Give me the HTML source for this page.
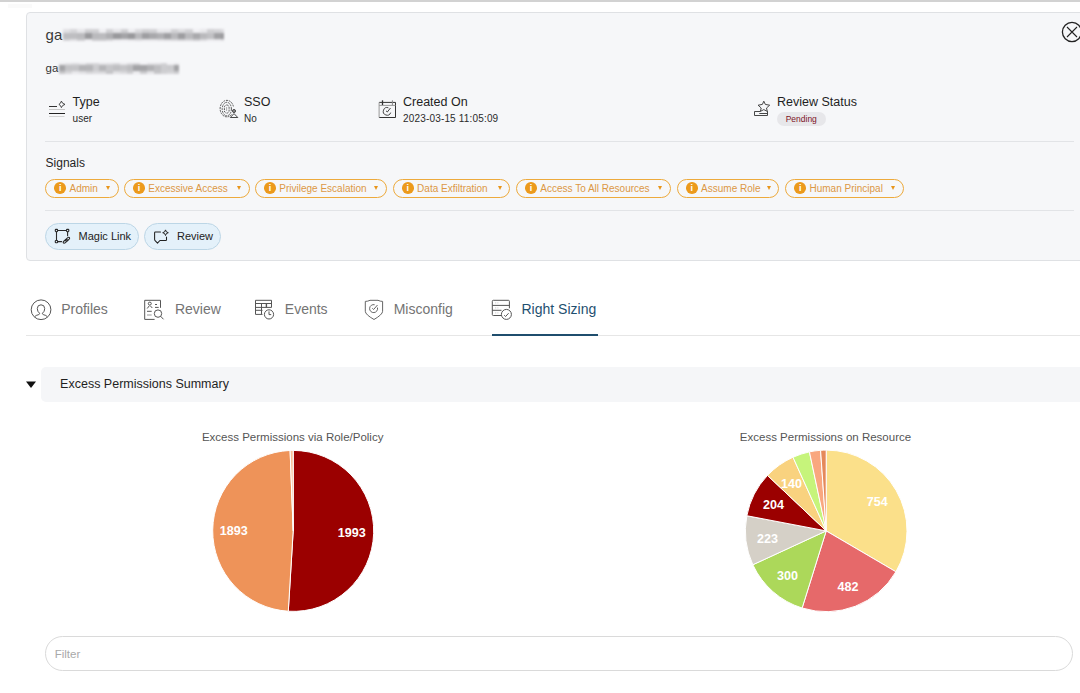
<!DOCTYPE html>
<html><head><meta charset="utf-8">
<style>
*{box-sizing:border-box;margin:0;padding:0}
html,body{width:1080px;height:693px;overflow:hidden;background:#fff;font-family:"Liberation Sans",sans-serif;color:#1f1f1f}
.a{position:absolute;white-space:nowrap;line-height:1}
#topbar{position:absolute;left:0;top:0;width:1080px;height:2px;background:#d2d2d2}
#card{position:absolute;left:26px;top:12px;width:1100px;height:249px;background:#f6f7f9;border:1px solid #dfe1e4;border-radius:4px}
.blur{position:absolute;background:#c9cbce;filter:blur(1.2px)}
.div{position:absolute;height:1px;background:#e2e4e7}
.lbl{font-size:12.5px;color:#1f1f1f;margin-top:1px}
.val{font-size:10px;color:#2a2a2a;margin-top:1.2px}
#pending{position:absolute;left:777px;top:111.7px;width:48.5px;height:14.3px;border-radius:8px;background:#e7e7ea;color:#7d1326;font-size:8.5px;line-height:14.3px;text-align:center}
.chips{position:absolute;left:26px;top:178.6px}
.chip{position:absolute;top:-0.1px;height:19.1px;border:1.4px solid #edaa3c;border-radius:10px;background:transparent}
.chip .info{position:absolute;left:8.2px;top:2.8px;width:11.7px;height:11.7px;border-radius:50%;background:#ec9a1c;color:#fff;font-size:9px;font-weight:bold;text-align:center;line-height:12px}
.chip .ct{position:absolute;left:23.3px;top:4.2px;font-size:10px;line-height:10px;color:#dc9845}
.chip .caret{position:absolute;right:7.6px;top:6.7px;width:0;height:0;border-left:2.7px solid transparent;border-right:2.7px solid transparent;border-top:4.4px solid #e8951a}
.btn{position:absolute;top:223px;height:26.5px;border:1px solid #bcd6e6;border-radius:14px;background:#e4f1fa}
.btn .t{position:absolute;font-size:11px;color:#222;line-height:1}
.tab{position:absolute;top:301.9px;font-size:14px;line-height:1;color:#747474}
#tabline{position:absolute;left:26px;top:335px;width:1054px;height:1px;background:#e6e6e6}
#tabact{position:absolute;left:492px;top:334px;width:105.5px;height:2px;background:#1f4e6d}
#acc{position:absolute;left:40.6px;top:366.7px;width:1100px;height:35.1px;border-radius:5px;background:#f5f6f8}
.ptitle{position:absolute;top:431.7px;font-size:11.5px;line-height:1;color:#555;text-align:center;width:300px}
.plabel{position:absolute;font-size:12.6px;font-weight:bold;color:#fff;line-height:1;text-align:center;width:40px;margin-top:-0.3px}
#filter{position:absolute;left:45.4px;top:636.2px;width:1627.6px;height:35.2px;border:1.2px solid #dadada;border-radius:18px;background:#fff}
</style></head><body>
<div id="topbar"></div>
<div style="position:absolute;left:8px;top:3.5px;width:24px;height:4px;background:#fafafa"></div>
<div id="card"></div>

<!-- title -->
<div class="a" style="left:45.6px;top:27.3px;font-size:15px;color:#3a3a3a">ga</div>
<div style="position:absolute;left:0;top:0;filter:blur(0.9px)"><div style="position:absolute;left:63.0px;top:28.7px;width:7.5px;height:4.699999999999999px;background:rgb(225,225,228)"></div><div style="position:absolute;left:70.2px;top:28.7px;width:7.5px;height:4.699999999999999px;background:rgb(214,214,217)"></div><div style="position:absolute;left:77.4px;top:28.7px;width:7.5px;height:4.699999999999999px;background:rgb(230,230,233)"></div><div style="position:absolute;left:84.6px;top:28.7px;width:7.5px;height:4.699999999999999px;background:rgb(208,208,211)"></div><div style="position:absolute;left:91.8px;top:28.7px;width:7.5px;height:4.699999999999999px;background:rgb(209,209,212)"></div><div style="position:absolute;left:99.0px;top:28.7px;width:7.5px;height:4.699999999999999px;background:rgb(239,239,242)"></div><div style="position:absolute;left:106.2px;top:28.7px;width:7.5px;height:4.699999999999999px;background:rgb(211,211,214)"></div><div style="position:absolute;left:113.4px;top:28.7px;width:7.5px;height:4.699999999999999px;background:rgb(228,228,231)"></div><div style="position:absolute;left:120.6px;top:28.7px;width:7.5px;height:4.699999999999999px;background:rgb(208,208,211)"></div><div style="position:absolute;left:127.8px;top:28.7px;width:7.5px;height:4.699999999999999px;background:rgb(237,237,240)"></div><div style="position:absolute;left:135.0px;top:28.7px;width:7.5px;height:4.699999999999999px;background:rgb(218,218,221)"></div><div style="position:absolute;left:142.2px;top:28.7px;width:7.5px;height:4.699999999999999px;background:rgb(207,207,210)"></div><div style="position:absolute;left:149.4px;top:28.7px;width:7.5px;height:4.699999999999999px;background:rgb(210,210,213)"></div><div style="position:absolute;left:156.6px;top:28.7px;width:7.5px;height:4.699999999999999px;background:rgb(232,232,235)"></div><div style="position:absolute;left:163.8px;top:28.7px;width:7.5px;height:4.699999999999999px;background:rgb(231,231,234)"></div><div style="position:absolute;left:171.0px;top:28.7px;width:7.5px;height:4.699999999999999px;background:rgb(209,209,212)"></div><div style="position:absolute;left:178.2px;top:28.7px;width:7.5px;height:4.699999999999999px;background:rgb(220,220,223)"></div><div style="position:absolute;left:185.4px;top:28.7px;width:7.5px;height:4.699999999999999px;background:rgb(210,210,213)"></div><div style="position:absolute;left:192.6px;top:28.7px;width:7.5px;height:4.699999999999999px;background:rgb(240,240,243)"></div><div style="position:absolute;left:199.8px;top:28.7px;width:7.5px;height:4.699999999999999px;background:rgb(232,232,235)"></div><div style="position:absolute;left:207.0px;top:28.7px;width:7.5px;height:4.699999999999999px;background:rgb(208,208,211)"></div><div style="position:absolute;left:214.2px;top:28.7px;width:7.5px;height:4.699999999999999px;background:rgb(212,212,215)"></div><div style="position:absolute;left:221.4px;top:28.7px;width:2.9px;height:4.699999999999999px;background:rgb(219,219,222)"></div><div style="position:absolute;left:63.0px;top:33.4px;width:7.5px;height:5.200000000000003px;background:rgb(190,190,193)"></div><div style="position:absolute;left:70.2px;top:33.4px;width:7.5px;height:5.200000000000003px;background:rgb(190,190,193)"></div><div style="position:absolute;left:77.4px;top:33.4px;width:7.5px;height:5.200000000000003px;background:rgb(187,187,190)"></div><div style="position:absolute;left:84.6px;top:33.4px;width:7.5px;height:5.200000000000003px;background:rgb(153,153,156)"></div><div style="position:absolute;left:91.8px;top:33.4px;width:7.5px;height:5.200000000000003px;background:rgb(186,186,189)"></div><div style="position:absolute;left:99.0px;top:33.4px;width:7.5px;height:5.200000000000003px;background:rgb(187,187,190)"></div><div style="position:absolute;left:106.2px;top:33.4px;width:7.5px;height:5.200000000000003px;background:rgb(175,175,178)"></div><div style="position:absolute;left:113.4px;top:33.4px;width:7.5px;height:5.200000000000003px;background:rgb(153,153,156)"></div><div style="position:absolute;left:120.6px;top:33.4px;width:7.5px;height:5.200000000000003px;background:rgb(164,164,167)"></div><div style="position:absolute;left:127.8px;top:33.4px;width:7.5px;height:5.200000000000003px;background:rgb(152,152,155)"></div><div style="position:absolute;left:135.0px;top:33.4px;width:7.5px;height:5.200000000000003px;background:rgb(185,185,188)"></div><div style="position:absolute;left:142.2px;top:33.4px;width:7.5px;height:5.200000000000003px;background:rgb(158,158,161)"></div><div style="position:absolute;left:149.4px;top:33.4px;width:7.5px;height:5.200000000000003px;background:rgb(168,168,171)"></div><div style="position:absolute;left:156.6px;top:33.4px;width:7.5px;height:5.200000000000003px;background:rgb(176,176,179)"></div><div style="position:absolute;left:163.8px;top:33.4px;width:7.5px;height:5.200000000000003px;background:rgb(159,159,162)"></div><div style="position:absolute;left:171.0px;top:33.4px;width:7.5px;height:5.200000000000003px;background:rgb(184,184,187)"></div><div style="position:absolute;left:178.2px;top:33.4px;width:7.5px;height:5.200000000000003px;background:rgb(157,157,160)"></div><div style="position:absolute;left:185.4px;top:33.4px;width:7.5px;height:5.200000000000003px;background:rgb(186,186,189)"></div><div style="position:absolute;left:192.6px;top:33.4px;width:7.5px;height:5.200000000000003px;background:rgb(169,169,172)"></div><div style="position:absolute;left:199.8px;top:33.4px;width:7.5px;height:5.200000000000003px;background:rgb(185,185,188)"></div><div style="position:absolute;left:207.0px;top:33.4px;width:7.5px;height:5.200000000000003px;background:rgb(193,193,196)"></div><div style="position:absolute;left:214.2px;top:33.4px;width:7.5px;height:5.200000000000003px;background:rgb(161,161,164)"></div><div style="position:absolute;left:221.4px;top:33.4px;width:2.9px;height:5.200000000000003px;background:rgb(156,156,159)"></div><div style="position:absolute;left:63.0px;top:38.6px;width:7.5px;height:2.6999999999999957px;background:rgb(212,212,215)"></div><div style="position:absolute;left:70.2px;top:38.6px;width:7.5px;height:2.6999999999999957px;background:rgb(223,223,226)"></div><div style="position:absolute;left:77.4px;top:38.6px;width:7.5px;height:2.6999999999999957px;background:rgb(206,206,209)"></div><div style="position:absolute;left:84.6px;top:38.6px;width:7.5px;height:2.6999999999999957px;background:rgb(235,235,238)"></div><div style="position:absolute;left:91.8px;top:38.6px;width:7.5px;height:2.6999999999999957px;background:rgb(204,204,207)"></div><div style="position:absolute;left:99.0px;top:38.6px;width:7.5px;height:2.6999999999999957px;background:rgb(203,203,206)"></div><div style="position:absolute;left:106.2px;top:38.6px;width:7.5px;height:2.6999999999999957px;background:rgb(213,213,216)"></div><div style="position:absolute;left:113.4px;top:38.6px;width:7.5px;height:2.6999999999999957px;background:rgb(231,231,234)"></div><div style="position:absolute;left:120.6px;top:38.6px;width:7.5px;height:2.6999999999999957px;background:rgb(234,234,237)"></div><div style="position:absolute;left:127.8px;top:38.6px;width:7.5px;height:2.6999999999999957px;background:rgb(227,227,230)"></div><div style="position:absolute;left:135.0px;top:38.6px;width:7.5px;height:2.6999999999999957px;background:rgb(220,220,223)"></div><div style="position:absolute;left:142.2px;top:38.6px;width:7.5px;height:2.6999999999999957px;background:rgb(229,229,232)"></div><div style="position:absolute;left:149.4px;top:38.6px;width:7.5px;height:2.6999999999999957px;background:rgb(229,229,232)"></div><div style="position:absolute;left:156.6px;top:38.6px;width:7.5px;height:2.6999999999999957px;background:rgb(223,223,226)"></div><div style="position:absolute;left:163.8px;top:38.6px;width:7.5px;height:2.6999999999999957px;background:rgb(219,219,222)"></div><div style="position:absolute;left:171.0px;top:38.6px;width:7.5px;height:2.6999999999999957px;background:rgb(215,215,218)"></div><div style="position:absolute;left:178.2px;top:38.6px;width:7.5px;height:2.6999999999999957px;background:rgb(211,211,214)"></div><div style="position:absolute;left:185.4px;top:38.6px;width:7.5px;height:2.6999999999999957px;background:rgb(215,215,218)"></div><div style="position:absolute;left:192.6px;top:38.6px;width:7.5px;height:2.6999999999999957px;background:rgb(205,205,208)"></div><div style="position:absolute;left:199.8px;top:38.6px;width:7.5px;height:2.6999999999999957px;background:rgb(219,219,222)"></div><div style="position:absolute;left:207.0px;top:38.6px;width:7.5px;height:2.6999999999999957px;background:rgb(233,233,236)"></div><div style="position:absolute;left:214.2px;top:38.6px;width:7.5px;height:2.6999999999999957px;background:rgb(231,231,234)"></div><div style="position:absolute;left:221.4px;top:38.6px;width:2.9px;height:2.6999999999999957px;background:rgb(221,221,224)"></div></div>
<div class="a" style="left:45.6px;top:63px;font-size:11.5px;color:#333">ga</div>
<div style="position:absolute;left:0;top:0;filter:blur(0.9px)"><div style="position:absolute;left:58.6px;top:62.8px;width:7.1px;height:2.4000000000000057px;background:rgb(233,233,236)"></div><div style="position:absolute;left:65.4px;top:62.8px;width:7.1px;height:2.4000000000000057px;background:rgb(224,224,227)"></div><div style="position:absolute;left:72.2px;top:62.8px;width:7.1px;height:2.4000000000000057px;background:rgb(219,219,222)"></div><div style="position:absolute;left:79.0px;top:62.8px;width:7.1px;height:2.4000000000000057px;background:rgb(229,229,232)"></div><div style="position:absolute;left:85.8px;top:62.8px;width:7.1px;height:2.4000000000000057px;background:rgb(212,212,215)"></div><div style="position:absolute;left:92.6px;top:62.8px;width:7.1px;height:2.4000000000000057px;background:rgb(213,213,216)"></div><div style="position:absolute;left:99.4px;top:62.8px;width:7.1px;height:2.4000000000000057px;background:rgb(226,226,229)"></div><div style="position:absolute;left:106.2px;top:62.8px;width:7.1px;height:2.4000000000000057px;background:rgb(223,223,226)"></div><div style="position:absolute;left:113.0px;top:62.8px;width:7.1px;height:2.4000000000000057px;background:rgb(215,215,218)"></div><div style="position:absolute;left:119.8px;top:62.8px;width:7.1px;height:2.4000000000000057px;background:rgb(234,234,237)"></div><div style="position:absolute;left:126.6px;top:62.8px;width:7.1px;height:2.4000000000000057px;background:rgb(220,220,223)"></div><div style="position:absolute;left:133.4px;top:62.8px;width:7.1px;height:2.4000000000000057px;background:rgb(214,214,217)"></div><div style="position:absolute;left:140.2px;top:62.8px;width:7.1px;height:2.4000000000000057px;background:rgb(239,239,242)"></div><div style="position:absolute;left:147.0px;top:62.8px;width:7.1px;height:2.4000000000000057px;background:rgb(225,225,228)"></div><div style="position:absolute;left:153.8px;top:62.8px;width:7.1px;height:2.4000000000000057px;background:rgb(223,223,226)"></div><div style="position:absolute;left:160.6px;top:62.8px;width:7.1px;height:2.4000000000000057px;background:rgb(211,211,214)"></div><div style="position:absolute;left:167.4px;top:62.8px;width:7.1px;height:2.4000000000000057px;background:rgb(240,240,243)"></div><div style="position:absolute;left:174.2px;top:62.8px;width:5.1px;height:2.4000000000000057px;background:rgb(231,231,234)"></div><div style="position:absolute;left:58.6px;top:65.2px;width:7.1px;height:5.599999999999994px;background:rgb(164,164,167)"></div><div style="position:absolute;left:65.4px;top:65.2px;width:7.1px;height:5.599999999999994px;background:rgb(195,195,198)"></div><div style="position:absolute;left:72.2px;top:65.2px;width:7.1px;height:5.599999999999994px;background:rgb(196,196,199)"></div><div style="position:absolute;left:79.0px;top:65.2px;width:7.1px;height:5.599999999999994px;background:rgb(180,180,183)"></div><div style="position:absolute;left:85.8px;top:65.2px;width:7.1px;height:5.599999999999994px;background:rgb(181,181,184)"></div><div style="position:absolute;left:92.6px;top:65.2px;width:7.1px;height:5.599999999999994px;background:rgb(204,204,207)"></div><div style="position:absolute;left:99.4px;top:65.2px;width:7.1px;height:5.599999999999994px;background:rgb(182,182,185)"></div><div style="position:absolute;left:106.2px;top:65.2px;width:7.1px;height:5.599999999999994px;background:rgb(198,198,201)"></div><div style="position:absolute;left:113.0px;top:65.2px;width:7.1px;height:5.599999999999994px;background:rgb(191,191,194)"></div><div style="position:absolute;left:119.8px;top:65.2px;width:7.1px;height:5.599999999999994px;background:rgb(197,197,200)"></div><div style="position:absolute;left:126.6px;top:65.2px;width:7.1px;height:5.599999999999994px;background:rgb(189,189,192)"></div><div style="position:absolute;left:133.4px;top:65.2px;width:7.1px;height:5.599999999999994px;background:rgb(164,164,167)"></div><div style="position:absolute;left:140.2px;top:65.2px;width:7.1px;height:5.599999999999994px;background:rgb(165,165,168)"></div><div style="position:absolute;left:147.0px;top:65.2px;width:7.1px;height:5.599999999999994px;background:rgb(177,177,180)"></div><div style="position:absolute;left:153.8px;top:65.2px;width:7.1px;height:5.599999999999994px;background:rgb(190,190,193)"></div><div style="position:absolute;left:160.6px;top:65.2px;width:7.1px;height:5.599999999999994px;background:rgb(204,204,207)"></div><div style="position:absolute;left:167.4px;top:65.2px;width:7.1px;height:5.599999999999994px;background:rgb(202,202,205)"></div><div style="position:absolute;left:174.2px;top:65.2px;width:5.1px;height:5.599999999999994px;background:rgb(164,164,167)"></div><div style="position:absolute;left:58.6px;top:70.8px;width:7.1px;height:2.9000000000000057px;background:rgb(198,198,201)"></div><div style="position:absolute;left:65.4px;top:70.8px;width:7.1px;height:2.9000000000000057px;background:rgb(214,214,217)"></div><div style="position:absolute;left:72.2px;top:70.8px;width:7.1px;height:2.9000000000000057px;background:rgb(231,231,234)"></div><div style="position:absolute;left:79.0px;top:70.8px;width:7.1px;height:2.9000000000000057px;background:rgb(223,223,226)"></div><div style="position:absolute;left:85.8px;top:70.8px;width:7.1px;height:2.9000000000000057px;background:rgb(213,213,216)"></div><div style="position:absolute;left:92.6px;top:70.8px;width:7.1px;height:2.9000000000000057px;background:rgb(219,219,222)"></div><div style="position:absolute;left:99.4px;top:70.8px;width:7.1px;height:2.9000000000000057px;background:rgb(217,217,220)"></div><div style="position:absolute;left:106.2px;top:70.8px;width:7.1px;height:2.9000000000000057px;background:rgb(196,196,199)"></div><div style="position:absolute;left:113.0px;top:70.8px;width:7.1px;height:2.9000000000000057px;background:rgb(224,224,227)"></div><div style="position:absolute;left:119.8px;top:70.8px;width:7.1px;height:2.9000000000000057px;background:rgb(217,217,220)"></div><div style="position:absolute;left:126.6px;top:70.8px;width:7.1px;height:2.9000000000000057px;background:rgb(205,205,208)"></div><div style="position:absolute;left:133.4px;top:70.8px;width:7.1px;height:2.9000000000000057px;background:rgb(234,234,237)"></div><div style="position:absolute;left:140.2px;top:70.8px;width:7.1px;height:2.9000000000000057px;background:rgb(202,202,205)"></div><div style="position:absolute;left:147.0px;top:70.8px;width:7.1px;height:2.9000000000000057px;background:rgb(226,226,229)"></div><div style="position:absolute;left:153.8px;top:70.8px;width:7.1px;height:2.9000000000000057px;background:rgb(198,198,201)"></div><div style="position:absolute;left:160.6px;top:70.8px;width:7.1px;height:2.9000000000000057px;background:rgb(208,208,211)"></div><div style="position:absolute;left:167.4px;top:70.8px;width:7.1px;height:2.9000000000000057px;background:rgb(213,213,216)"></div><div style="position:absolute;left:174.2px;top:70.8px;width:5.1px;height:2.9000000000000057px;background:rgb(203,203,206)"></div></div>

<!-- close -->
<svg class="a" style="left:1060px;top:20px" width="24" height="24" viewBox="0 0 24 24"><circle cx="12" cy="12" r="9.6" fill="none" stroke="#222" stroke-width="1.3"/><path d="M7 7L17 17M17 7L7 17" stroke="#222" stroke-width="1.1"/></svg>

<!-- info row -->
<svg class="a" style="left:46px;top:98px" width="22" height="22" viewBox="0 0 22 22"><path d="M3 8.5H11" stroke="#333" stroke-width="1"/><path d="M3 11.5H19" stroke="#c8c8c8" stroke-width="1"/><path d="M3 15.5H19" stroke="#222" stroke-width="1"/><path d="M3 18.5H18.5" stroke="#d2d2d2" stroke-width="1"/><path d="M15.4 3.1Q16.1 5.7 19 6.4Q16.1 7.1 15.4 9.6Q14.7 7.1 12.9 6.4Q14.7 5.7 15.4 3.1Z" fill="none" stroke="#333" stroke-width="0.9" stroke-linejoin="round"/></svg>
<div class="a lbl" style="left:72.6px;top:95.3px">Type</div>
<div class="a val" style="left:72.6px;top:113px">user</div>

<svg class="a" style="left:218px;top:99px" width="22" height="22" viewBox="0 0 22 22"><g fill="none" stroke="#444" stroke-width="0.9" stroke-dasharray="1.9 0.9"><path d="M13.6 15.5A6.75 8.25 0 1 1 15.5 8"/><ellipse cx="8.8" cy="10.05" rx="4.6" ry="6.75"/><rect x="6.4" y="6" width="4.7" height="8.1" rx="2.35"/></g><path d="M8.6 8V12" stroke="#999" stroke-width="0.8"/><circle cx="16" cy="12" r="1.5" fill="#999" stroke="#333" stroke-width="0.9"/><path d="M12.3 18.5L16 14.6L19.8 18.5Z" fill="#f6f7f9" stroke="#333" stroke-width="0.9" stroke-linejoin="round"/></svg>
<div class="a lbl" style="left:244px;top:95.3px">SSO</div>
<div class="a val" style="left:244px;top:113px">No</div>

<svg class="a" style="left:377px;top:99px" width="22" height="22" viewBox="0 0 22 22"><g fill="none" stroke="#333" stroke-width="1"><path d="M18.5 3.4V18.5H2.1M2.1 3.4H18.5"/><path d="M2.1 3.4V18.5M2.1 6.4H18.5" stroke="#999"/><path d="M5.5 1.3V6" stroke-width="1.3"/><path d="M15.4 1.3V6" stroke="#888"/><path d="M13.7 13.6A3.8 3.8 0 1 1 11.4 8.8" stroke="#444"/><path d="M9 11.8L10.3 13L13.5 9" stroke="#444"/></g></svg>
<div class="a lbl" style="left:403px;top:95.3px">Created On</div>
<div class="a val" style="left:403px;top:113px;letter-spacing:0.17px">2023-03-15 11:05:09</div>

<svg class="a" style="left:752px;top:98px" width="22" height="22" viewBox="0 0 22 22"><path d="M11.8 3.2L13.3 6.4L17.7 7.2L14.5 10L15.3 13.4L11.8 11.6L8.4 13.4L9.2 10L6.1 7.2L10.4 6.4Z" fill="#f6f7f9" stroke="#333" stroke-width="0.9" stroke-linejoin="round"/><path d="M2.5 13.5H8.4M7.3 15.5H15.5M2.5 17.5H15.5M2.5 13.5V17.5M15.5 13.2V17.5" fill="none" stroke="#333" stroke-width="0.9"/></svg>
<div class="a lbl" style="left:777px;top:95.3px">Review Status</div>
<div id="pending">Pending</div>

<div class="div" style="left:45px;top:141px;width:1028.5px"></div>
<div class="a" style="left:45.6px;top:157.2px;font-size:12px;color:#1f1f1f">Signals</div>
<div class="chips">
<div class="chip" style="left:19.2px;width:73.5px"><span class="info">i</span><span class="ct">Admin</span><span class="caret"></span></div>
<div class="chip" style="left:98.0px;width:125.8px"><span class="info">i</span><span class="ct">Excessive Access</span><span class="caret"></span></div>
<div class="chip" style="left:229.0px;width:131.7px"><span class="info">i</span><span class="ct">Privilege Escalation</span><span class="caret"></span></div>
<div class="chip" style="left:366.8px;width:117.4px"><span class="info">i</span><span class="ct">Data Exfiltration</span><span class="caret"></span></div>
<div class="chip" style="left:490.0px;width:154.6px"><span class="info">i</span><span class="ct">Access To All Resources</span><span class="caret"></span></div>
<div class="chip" style="left:650.8px;width:102.7px"><span class="info">i</span><span class="ct">Assume Role</span><span class="caret"></span></div>
<div class="chip" style="left:759.2px;width:118.8px"><span class="info">i</span><span class="ct">Human Principal</span><span class="caret"></span></div>

</div>
<div class="div" style="left:45px;top:210px;width:1028.5px"></div>

<!-- buttons -->
<div class="btn" style="left:45.2px;width:94.2px"></div>
<svg class="a" style="left:53px;top:227px" width="20" height="20" viewBox="0 0 20 20"><g fill="none" stroke="#2a2a2a" stroke-width="1.1" stroke-linecap="round"><path d="M4.7 3.5H13.3M3.5 4.9V13.3M4.7 14.6H8.6M14.6 4.9V8.8"/><rect x="2.3" y="2.4" width="2.3" height="2.3" rx="0.6"/><rect x="13.5" y="2.4" width="2.3" height="2.3" rx="0.6"/><rect x="2.3" y="13.5" width="2.3" height="2.3" rx="0.6"/><ellipse cx="12.3" cy="14.3" rx="2.5" ry="1.1" transform="rotate(-40 12.3 14.3)"/><ellipse cx="14.6" cy="12.2" rx="2.5" ry="1.1" transform="rotate(-40 14.6 12.2)"/></g></svg>
<div class="a" style="left:78.5px;top:230.8px;font-size:11px;color:#222">Magic Link</div>

<div class="btn" style="left:144.3px;width:76.3px"></div>
<svg class="a" style="left:152px;top:228px" width="18" height="18" viewBox="0 0 18 18"><path d="M8.5 4H3.4Q2.6 4 2.6 4.8V11.6Q2.6 12.2 3.1 12.7L5.5 15.2L7.9 12.5H13.8Q14.5 12.5 14.5 11.8V9.1" fill="none" stroke="#222" stroke-width="1.05" stroke-linecap="round" stroke-linejoin="round"/><path d="M13.5 1.9Q13.8 4.4 16.3 4.7Q13.8 5 13.5 7.5Q13.2 5 10.7 4.7Q13.2 4.4 13.5 1.9Z" fill="none" stroke="#222" stroke-width="1" stroke-linejoin="round"/></svg>
<div class="a" style="left:177px;top:230.8px;font-size:11px;color:#222">Review</div>

<!-- tabs -->
<svg class="a" style="left:30px;top:299px" width="22" height="22" viewBox="0 0 22 22"><circle cx="11.05" cy="10.75" r="9.85" fill="none" stroke="#555" stroke-width="1"/><path d="M4.8 17.6Q6 16.2 8.2 15.8Q9.6 15.5 9.6 14.3Q7.3 12.6 7.3 9.6Q7.3 5.8 11 5.8Q14.7 5.8 14.7 9.6Q14.7 12.6 12.4 14.3Q12.4 15.5 13.8 15.8Q16 16.2 17.2 17.6" fill="none" stroke="#555" stroke-width="1"/></svg>
<div class="tab" style="left:61.2px">Profiles</div>

<svg class="a" style="left:143px;top:299px" width="22" height="22" viewBox="0 0 22 22"><g fill="none" stroke="#555" stroke-width="1"><path d="M17.5 8.8V1.3H1.7V20.4H11.6"/><circle cx="6.8" cy="4.6" r="1.5"/><path d="M4.2 9.5L6.3 6.8M7.3 6.8L9.3 9"/><path d="M12 5.5H14M12 8.4H15.7M4 12.3H8.7"/><path d="M4 16H8.7" stroke="#999"/><circle cx="15" cy="14.6" r="3.7"/><path d="M17.7 17.3L20.5 20.3"/></g></svg>
<div class="tab" style="left:174.9px">Review</div>

<svg class="a" style="left:253px;top:299px" width="23" height="23" viewBox="0 0 23 23"><g fill="none" stroke="#555" stroke-width="1"><path d="M2.5 15.4V1.3H18.5V8.4M2.5 4.5H18.5M2.5 8.4H18.5M2.5 11.3H9.5M2.5 15.4H9.5M8.5 4.5V15.4"/><path d="M13.4 4.5V8.4" stroke-width="1.4"/><circle cx="16" cy="15.4" r="4.6" fill="#fff"/><path d="M16 12.4V15.6H18.2"/></g></svg>
<div class="tab" style="left:284.8px">Events</div>

<svg class="a" style="left:363px;top:299px" width="22" height="22" viewBox="0 0 22 22"><g fill="none" stroke="#666" stroke-width="1"><path d="M11 1.3H15Q17.2 2.4 19.6 2.4V12.3Q19.6 15.5 11 20.5Q2.3 15.5 2.3 12.3V2.4Q4.8 2.4 7 1.3Z"/><path d="M14.46 8.56A4 4 0 1 1 11.64 5.74"/><path d="M9.3 9.3L10.6 10.5L14.5 6"/></g></svg>
<div class="tab" style="left:393.7px">Misconfig</div>

<svg class="a" style="left:491px;top:299px" width="22" height="22" viewBox="0 0 22 22"><g fill="none" stroke="#555" stroke-width="1"><path d="M10.5 16.5H2.3Q1.3 16.5 1.3 15.5V2.3Q1.3 1.3 2.3 1.3H17.4Q18.4 1.3 18.4 2.3V9.3M1.3 6.4H18.4M1.3 11.3H10.5"/><path d="M4.3 3.9H5.2M6.5 3.9H7.3M4.3 8.9H5.2M6.5 8.9H7.3M4.3 13.9H5.2M6.5 13.9H7.3" stroke="#bbb"/><circle cx="15.4" cy="15.4" r="5"/><path d="M13.2 16.2L14.6 17.5L17.6 14.2"/></g></svg>
<div class="tab" style="left:521.5px;color:#1f5070">Right Sizing</div>
<div id="tabline"></div>
<div id="tabact"></div>

<!-- accordion -->
<svg class="a" style="left:25px;top:380px" width="12" height="10" viewBox="0 0 12 10"><path d="M1 1.6H11L6 8Z" fill="#111"/></svg>
<div id="acc"></div>
<div class="a" style="left:60.1px;top:378.3px;font-size:12.5px;color:#1f1f1f">Excess Permissions Summary</div>

<!-- pies -->
<div class="ptitle" style="left:142.7px">Excess Permissions via Role/Policy</div>
<div class="ptitle" style="left:675.5px">Excess Permissions on Resource</div>
<svg class="a" style="left:0;top:0" width="1080" height="693">
<path d="M293.20 530.90 L293.20 450.40 A80.5 80.5 0 1 1 288.29 611.25 Z" fill="#9b0000" stroke="#fff" stroke-width="1" stroke-linejoin="round"/>
<path d="M293.20 530.90 L288.29 611.25 A80.5 80.5 0 0 1 290.10 450.46 Z" fill="#ee9359" stroke="#fff" stroke-width="1" stroke-linejoin="round"/>
<path d="M293.20 530.90 L290.10 450.46 A80.5 80.5 0 0 1 293.20 450.40 Z" fill="#f9bf98" stroke="#fff" stroke-width="1" stroke-linejoin="round"/>
<path d="M826.20 530.90 L826.20 450.10 A80.8 80.8 0 0 1 895.91 571.75 Z" fill="#fbe08a" stroke="#fff" stroke-width="1" stroke-linejoin="round"/>
<path d="M826.20 530.90 L895.91 571.75 A80.8 80.8 0 0 1 802.14 608.04 Z" fill="#e6696a" stroke="#fff" stroke-width="1" stroke-linejoin="round"/>
<path d="M826.20 530.90 L802.14 608.04 A80.8 80.8 0 0 1 752.84 564.77 Z" fill="#acd85a" stroke="#fff" stroke-width="1" stroke-linejoin="round"/>
<path d="M826.20 530.90 L752.84 564.77 A80.8 80.8 0 0 1 746.84 515.74 Z" fill="#d5d0c7" stroke="#fff" stroke-width="1" stroke-linejoin="round"/>
<path d="M826.20 530.90 L746.84 515.74 A80.8 80.8 0 0 1 767.48 475.40 Z" fill="#9b0000" stroke="#fff" stroke-width="1" stroke-linejoin="round"/>
<path d="M826.20 530.90 L767.48 475.40 A80.8 80.8 0 0 1 792.99 457.24 Z" fill="#f9d27f" stroke="#fff" stroke-width="1" stroke-linejoin="round"/>
<path d="M826.20 530.90 L792.99 457.24 A80.8 80.8 0 0 1 809.44 451.86 Z" fill="#c6f47b" stroke="#fff" stroke-width="1" stroke-linejoin="round"/>
<path d="M826.20 530.90 L809.44 451.86 A80.8 80.8 0 0 1 820.58 450.30 Z" fill="#f9a77f" stroke="#fff" stroke-width="1" stroke-linejoin="round"/>
<path d="M826.20 530.90 L820.58 450.30 A80.8 80.8 0 0 1 826.20 450.10 Z" fill="#e5895a" stroke="#fff" stroke-width="1" stroke-linejoin="round"/>
</svg>
<div class="plabel" style="left:213.7px;top:525px">1893</div>
<div class="plabel" style="left:331.8px;top:526.8px">1993</div>
<div class="plabel" style="left:857.3px;top:496.4px">754</div>
<div class="plabel" style="left:828px;top:581.4px">482</div>
<div class="plabel" style="left:767.5px;top:570.2px">300</div>
<div class="plabel" style="left:747.5px;top:533.3px">223</div>
<div class="plabel" style="left:753.4px;top:499px">204</div>
<div class="plabel" style="left:771.6px;top:478.2px">140</div>

<!-- filter -->
<div id="filter" style="width:1027.6px"></div>
<div class="a" style="left:54.7px;top:648.7px;font-size:11.5px;color:#a9a9a9">Filter</div>
</body></html>
